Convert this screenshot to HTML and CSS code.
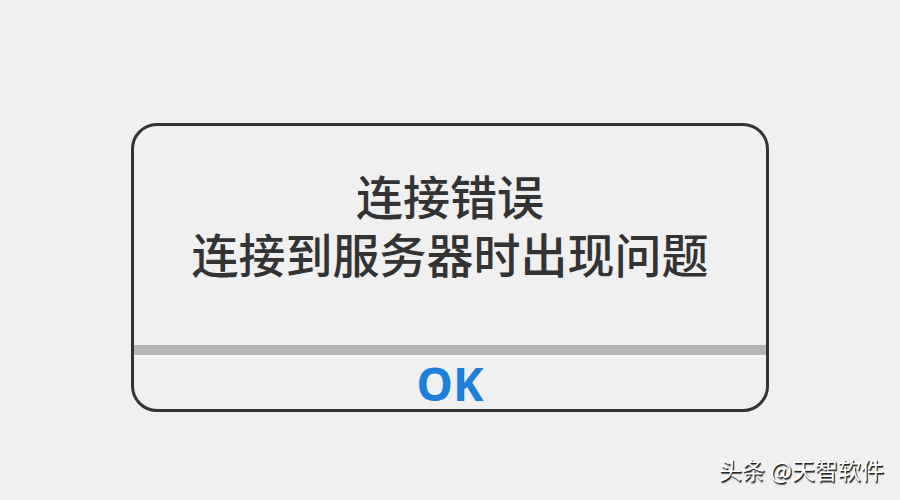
FILE: index.html
```html
<!DOCTYPE html>
<html lang="zh">
<head>
    <meta charset="UTF-8">
    <meta name="viewport" content="width=device-width, initial-scale=1.0">
    <link rel="stylesheet" href="styles.css">
</head>
<body>
    <div class="screen">
        <div class="dialog">
            <div class="message">
                <p>连接错误</p>
                <p>连接到服务器时出现问题</p>
            </div>
            <div class="divider"></div>
            <div class="actions">
                <button class="ok">OK</button>
            </div>
        </div>
        <div class="watermark">头条 @天智软件</div>
    </div>
</body>
</html>
```

FILE: styles.css
```css
html, body {
    margin: 0;
    height: 100%;
    background: #f0f0f0;
}

.screen {
    position: relative;
    height: 500px;
    padding: 123px 0 0 131px;
    box-sizing: border-box;
}

.dialog {
    width: 638px;
    height: 289px;
    box-sizing: border-box;
    border: 3px solid #333;
    border-radius: 26px;
    display: flex;
    flex-direction: column;
    overflow: hidden;
}

.message {
    height: 219px;
    box-sizing: border-box;
    padding-top: 40px;
    text-align: center;
    color: #333;
    font-family: "Noto Sans CJK SC", "Noto Sans", sans-serif;
    font-size: 47px;
    font-weight: 500;
    line-height: 58px;
}

.message p {
    margin: 0;
}

.divider {
    height: 10px;
    background: #b5b5b5;
    border-bottom: 2px solid #f8f8f8;
}

.actions {
    flex: 1;
    display: flex;
    align-items: center;
    justify-content: center;
}

.ok {
    border: 0;
    background: none;
    padding: 0;
    color: #1d7fd9;
    font-family: "Noto Sans", sans-serif;
    font-size: 46px;
    font-weight: 700;
    line-height: 1.1;
    cursor: pointer;
}

.watermark {
    position: absolute;
    right: 16px;
    bottom: 16px;
    color: #fff;
    font-family: "Noto Sans CJK SC", sans-serif;
    font-size: 23px;
    line-height: 1.2;
    text-shadow: 1px 1px 0 #222, 1px 2px 1px #555;
}
```
